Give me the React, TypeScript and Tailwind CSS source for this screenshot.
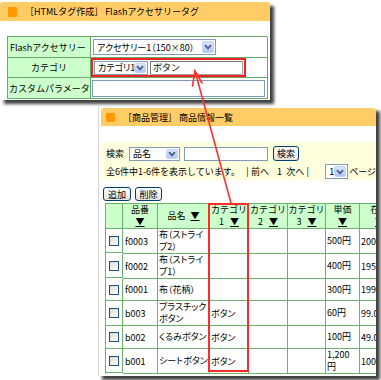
import React from "react";

function DropBtn() {
  return (
    <span className="flex h-full w-[12px] shrink-0 items-center justify-center rounded-[2px] border border-[#c3d3fd] bg-gradient-to-b from-[#dae4fc] to-[#b3c7f5]">
      <svg width="8" height="6" viewBox="0 0 8 6">
        <path d="M1 1.2 L4 4.4 L7 1.2" fill="none" stroke="#4d6185" strokeWidth="1.8" />
      </svg>
    </span>
  );
}

function Select({ className, text }: { className: string; text: string }) {
  return (
    <div className={`flex items-stretch border border-[#7f9db9] bg-white p-[1px] ${className}`}>
      <span className="flex min-w-0 flex-1 items-center whitespace-nowrap pl-[2px] [font-feature-settings:'palt']">{text}</span>
      <DropBtn />
    </div>
  );
}

function Tri() {
  return <span className="underline decoration-1 underline-offset-[1px]">▼</span>;
}

function Check() {
  return <span className="block h-[10px] w-[10px] border border-[#1c5180] bg-gradient-to-br from-[#dcdcd7] to-[#ffffff]" />;
}

const rows: { h: string; code: string; name: React.ReactNode; cat: string; price: React.ReactNode; stock: string }[] = [
  { h: "h-[24px]", code: "f0003", name: (<>布（ストライ<br />プ2）</>), cat: "", price: "500円", stock: "200.00" },
  { h: "h-[24px]", code: "f0002", name: (<>布（ストライ<br />プ1）</>), cat: "", price: "400円", stock: "195.00" },
  { h: "h-[22px]", code: "f0001", name: "布（花柄）", cat: "", price: "300円", stock: "199.00" },
  { h: "h-[25px]", code: "b003", name: (<>プラスチック<br />ボタン</>), cat: "ボタン", price: "60円", stock: "99.00" },
  { h: "h-[23px]", code: "b002", name: "くるみボタン", cat: "ボタン", price: "100円", stock: "49.00" },
  { h: "h-[24px]", code: "b001", name: "シートボタン", cat: "ボタン", price: (<>1,200<br />円</>), stock: "100.00" },
];

const cell = "border-r border-b border-[#6bb36b] flex items-center overflow-hidden whitespace-nowrap";
const hcell = "border-r border-b border-[#6bb36b] bg-[#ccffcc] flex flex-col items-center justify-center leading-[12px] overflow-hidden whitespace-nowrap";

export default function App() {
  return (
    <div className="relative h-[380px] w-[381px] overflow-hidden bg-white text-[9px] leading-none text-black font-['Noto_Sans_CJK_JP','Noto_Sans',sans-serif]">
      {/* Panel 1 */}
      <div className="absolute left-0 top-[2px] h-[98px] w-[270px] bg-white shadow-[4px_4px_3px_rgba(0,0,0,0.75)]">
        <div className="flex h-[19px] items-center gap-[8px] rounded-t-[3px] bg-[#ffcc66] pl-[8px]">
          <span className="h-[10px] w-[9px] rounded-[1px] bg-[#ff9900]" />
          <span className="whitespace-nowrap">［HTMLタグ作成］ Flashアクセサリータグ</span>
        </div>
        <div className="ml-[7px] mt-[15px] grid w-[260px] grid-cols-[83px_177px] grid-rows-[21px_20px_21px] border-l border-t border-[#66aa66]">
          <div className="flex items-center border-b border-r border-[#66aa66] bg-[#ccffcc] pl-[2px]">Flashアクセサリー</div>
          <div className="flex items-center border-b border-r border-[#66aa66] pl-[2px]">
            <Select className="h-[16px] w-[123px]" text="アクセサリー1（150×80）" />
          </div>
          <div className="flex items-center justify-center border-b border-r border-[#66aa66] bg-[#ccffcc]">カテゴリ</div>
          <div className="flex items-center border-b border-r border-[#66aa66]">
            <div className="flex h-[19px] w-[155px] items-center gap-[2px] border-2 border-[#ee2222] px-[1px]">
              <Select className="h-[14px] w-[54px]" text="カテゴリ1" />
              <div className="flex h-[14px] flex-1 items-center border border-[#a5a5a5] border-l-[#7a7a7a] border-t-[#7a7a7a] bg-white pl-[2px]">ボタン</div>
            </div>
          </div>
          <div className="flex items-center border-b border-r border-[#66aa66] bg-[#ccffcc] pl-[1px]">カスタムパラメータ</div>
          <div className="flex items-center border-b border-r border-[#66aa66] pl-[1px]">
            <div className="h-[17px] w-[173px] border border-[#7f9db9] bg-white" />
          </div>
        </div>
      </div>

      {/* Panel 2 */}
      <div className="absolute left-[98px] top-[107px] h-[269px] w-[278px] overflow-hidden border-l border-[#d6d6d6] bg-white shadow-[4px_4px_3px_rgba(0,0,0,0.75)]">
        <div className="ml-[2px] mt-[1px] flex h-[18px] items-center gap-[8px] rounded-t-[3px] bg-[#ffcc66] pl-[5px]">
          <span className="h-[9px] w-[9px] rounded-[1px] bg-[#ff9900]" />
          <span className="whitespace-nowrap">［商品管理］ 商品情報一覧</span>
        </div>

        <div className="ml-[3px] mt-[16px] h-[38px] bg-[#ffffdd] pl-[4px] pt-[4px]">
          <div className="flex h-[15px] items-center whitespace-nowrap">
            <span className="w-[23px]">検索</span>
            <Select className="h-[14px] w-[51px]" text="品名" />
            <div className="ml-[4px] h-[14px] w-[84px] border border-[#7f9db9] bg-white" />
            <div className="ml-[5px] flex h-[15px] w-[26px] items-center justify-center rounded-[3px] border border-[#003c74] bg-gradient-to-b from-white to-[#e6e4da]">検索</div>
          </div>
          <div className="mt-[3px] flex h-[15px] items-center whitespace-nowrap">
            <span className="w-[151px]">全6件中1-6件を表示しています。</span>
            <span className="w-[5px]">|</span>
            <span className="w-[28px]">前へ</span>
            <span className="w-[10px]">1</span>
            <span className="w-[22px]">次へ</span>
            <span className="w-[20px]">|</span>
            <Select className="h-[15px] w-[24px]" text="1" />
            <span className="ml-[1px]">ページ</span>
          </div>
        </div>

        <div className="ml-[4px] mt-[7px] flex gap-[4px]">
          <div className="flex h-[14px] w-[28px] items-center justify-center rounded-[3px] border border-[#003c74] bg-gradient-to-b from-white to-[#e6e4da]">追加</div>
          <div className="flex h-[14px] w-[27px] items-center justify-center rounded-[3px] border border-[#003c74] bg-gradient-to-b from-white to-[#e6e4da]">削除</div>
        </div>

        <div className="relative ml-[6px] mt-[2px]">
          <div className="grid w-max grid-cols-[17px_35px_52px_39px_39px_38px_34px_40px] border-l border-t border-[#6bb36b]">
            <div className={`${hcell} h-[25px]`} />
            <div className={hcell}><span>品番</span><Tri /></div>
            <div className={`${hcell} !flex-row gap-[5px]`}><span>品名</span><Tri /></div>
            <div className={hcell}><span>カテゴリ</span><span className="flex gap-[6px]"><span>1</span><Tri /></span></div>
            <div className={hcell}><span>カテゴリ</span><span className="flex gap-[6px]"><span>2</span><Tri /></span></div>
            <div className={hcell}><span>カテゴリ</span><span className="flex gap-[6px]"><span>3</span><Tri /></span></div>
            <div className={hcell}><span>単価</span><Tri /></div>
            <div className={hcell}><span>在庫</span><Tri /></div>
            {rows.map((r) => (
              <React.Fragment key={r.code}>
                <div className={`${cell} ${r.h} justify-center`}><Check /></div>
                <div className={`${cell} pl-[2px]`}>{r.code}</div>
                <div className={`${cell} pl-[1px] leading-[12px] [font-feature-settings:'palt']`}><span>{r.name}</span></div>
                <div className={`${cell} pl-[1px] [font-feature-settings:'palt']`}>{r.cat}</div>
                <div className={cell} />
                <div className={cell} />
                <div className={`${cell} pl-[1px] leading-[12px]`}><span>{r.price}</span></div>
                <div className={`${cell} pl-[1px]`}>{r.stock}</div>
              </React.Fragment>
            ))}
          </div>
          <div className="absolute left-[103px] top-0 h-[169px] w-[41px] border-2 border-[#ff2a2a]" />
        </div>
      </div>

      {/* Arrow overlay */}
      <svg className="pointer-events-none absolute left-0 top-0" width="381" height="380" viewBox="0 0 381 380">
        <g stroke="#ff3030" strokeWidth="1.6" fill="none" strokeLinecap="round">
          <line x1="231" y1="203" x2="195" y2="71" />
          <polyline points="192.5,86 195,71 202,83" />
        </g>
      </svg>
    </div>
  );
}
